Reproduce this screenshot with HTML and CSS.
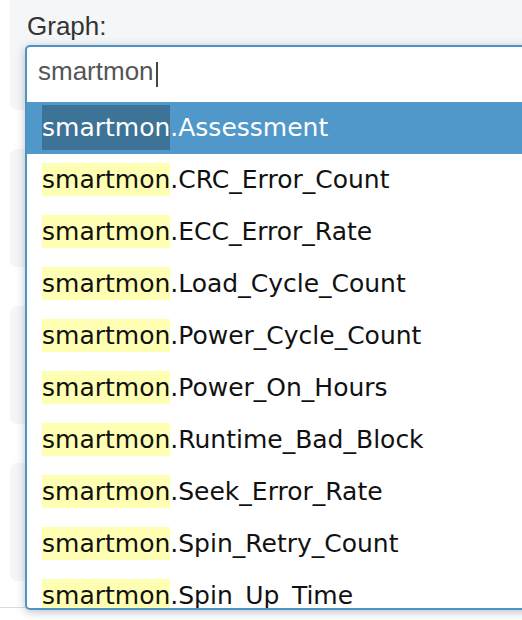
FILE: index.html
```html
<!DOCTYPE html>
<html>
<head>
<meta charset="utf-8">
<link rel="stylesheet" href="styles.css">
</head>
<body>
<div class="page">
  <div class="panels">
    <div class="panel panel-first"><label class="label">Graph:</label></div>
    <div class="panel"></div>
    <div class="panel"></div>
    <div class="panel"></div>
  </div>
  <div class="footer"></div>

  <div class="dropdown">
    <div class="search"><span class="query">smartmon</span><span class="caret"></span></div>
    <ul class="list">
      <li class="item active"><span class="hl">smartmon</span>.Assessment</li>
      <li class="item"><span class="hl">smartmon</span>.CRC_Error_Count</li>
      <li class="item"><span class="hl">smartmon</span>.ECC_Error_Rate</li>
      <li class="item"><span class="hl">smartmon</span>.Load_Cycle_Count</li>
      <li class="item"><span class="hl">smartmon</span>.Power_Cycle_Count</li>
      <li class="item"><span class="hl">smartmon</span>.Power_On_Hours</li>
      <li class="item"><span class="hl">smartmon</span>.Runtime_Bad_Block</li>
      <li class="item"><span class="hl">smartmon</span>.Seek_Error_Rate</li>
      <li class="item"><span class="hl">smartmon</span>.Spin_Retry_Count</li>
      <li class="item"><span class="hl">smartmon</span>.Spin_Up_Time</li>
    </ul>
  </div>
</div>
</body>
</html>
```

FILE: styles.css
```css
html, body {
  margin: 0;
  padding: 0;
  background: #ffffff;
  overflow: hidden;
}

.page {
  position: relative;
  width: 522px;
  height: 620px;
  overflow: hidden;
  font-family: "Liberation Sans", Arial, sans-serif;
}

.panels {
  display: flex;
  flex-direction: column;
  gap: 39px;
  padding-left: 10px;
  margin-top: -8px;
}

.panel {
  height: 118px;
  background: #f5f6f8;
  border-radius: 7px 0 0 7px;
  box-sizing: border-box;
}

.panel-first {
  padding: 19px 0 0 17px;
}

.label {
  display: block;
  font-size: 26px;
  line-height: 30px;
  color: #333333;
}

.footer {
  margin-top: 26px;
  border-top: 1px solid #dcdcdc;
  height: 20px;
}

.dropdown {
  position: absolute;
  left: 25px;
  top: 45px;
  width: 540px;
  border: 2px solid #4b93c8;
  border-radius: 5px;
  background: #ffffff;
  box-shadow: 0 2px 10px rgba(0, 0, 0, 0.25);
  overflow: hidden;
}

.search {
  height: 55px;
  box-sizing: border-box;
  padding: 9px 0 0 11px;
  font-size: 26px;
  line-height: 30px;
  color: #555555;
  display: flex;
  align-items: flex-start;
}

.caret {
  display: inline-block;
  width: 2px;
  height: 25px;
  margin-left: 2px;
  margin-top: 6px;
  background: #444444;
}

.list {
  list-style: none;
  margin: 0;
  padding: 0;
  height: 506px;
  overflow: hidden;
}

.item {
  height: 52px;
  padding-left: 15px;
  font-family: "DejaVu Sans", Verdana, sans-serif;
  font-size: 25px;
  line-height: 52px;
  color: #111111;
  white-space: nowrap;
}

.hl {
  background: #ffffb4;
  padding: 2px 0;
}

.item.active {
  background: #4f98c9;
  color: #ffffff;
}

.item.active .hl {
  background: #3e7398;
  padding: 8px 0;
}
```
